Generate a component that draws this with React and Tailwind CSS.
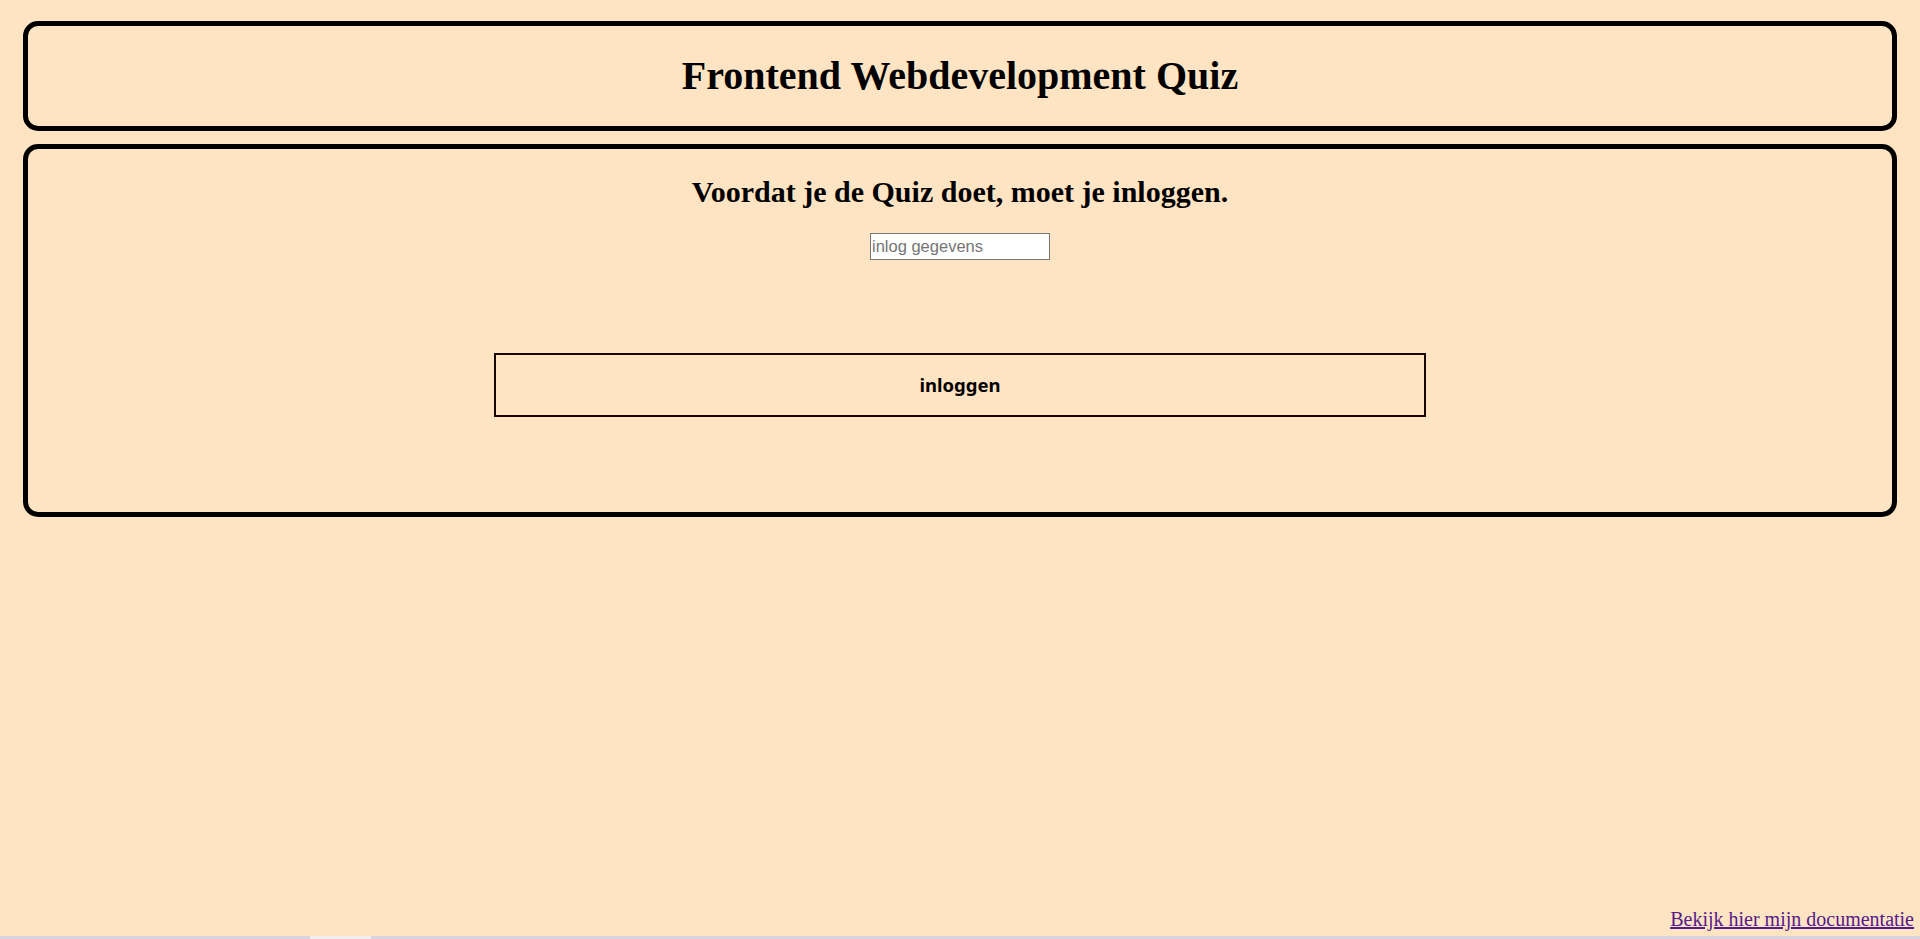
// App.jsx

export default function App() {
  return (
    <div className="flex h-screen flex-col overflow-hidden bg-[#ffe4c4] text-black" style={{ fontFamily: '"Liberation Serif", "Times New Roman", serif' }}>
      {/* Header */}
      <header className="mx-[23px] mt-[21px] flex h-[110px] items-center justify-center rounded-[15px] border-[5px] border-black">
        <h1 className="text-[40px] font-bold leading-none">Frontend Webdevelopment Quiz</h1>
      </header>

      {/* Login card */}
      <main className="mx-[23px] mt-[13px] flex h-[373px] flex-col items-center rounded-[15px] border-[5px] border-black pt-[28px]">
        <h2 className="text-[30px] font-bold leading-none">Voordat je de Quiz doet, moet je inloggen.</h2>

        <input
          type="text"
          placeholder="inlog gegevens"
          className="mt-[26px] h-[27px] w-[180px] border border-[#767676] bg-white px-[1px] text-[16.5px] leading-none text-black outline-none placeholder:text-[#757575]"
          style={{ fontFamily: '"Liberation Sans", Arial, sans-serif' }}
        />

        <button
          className="mt-[93px] h-[64px] w-[932px] border-2 border-[#1a0505] bg-transparent text-[18.5px] font-bold text-black"
          style={{ fontFamily: '"Noto Sans", "Open Sans", sans-serif' }}
        >
          inloggen
        </button>
      </main>

      {/* Footer link */}
      <div className="mt-auto flex justify-end pr-[6px]">
        <a href="#" className="text-[20px] leading-none text-[#551a8b] underline">
          Bekijk hier mijn documentatie
        </a>
      </div>

      {/* Scrollbar strip */}
      <div className="mt-[7px] flex h-[3px] shrink-0 bg-[#d9d3df]">
        <div className="ml-[310px] h-full w-[61px] bg-[#f0eeee]" />
      </div>
    </div>
  );
}
